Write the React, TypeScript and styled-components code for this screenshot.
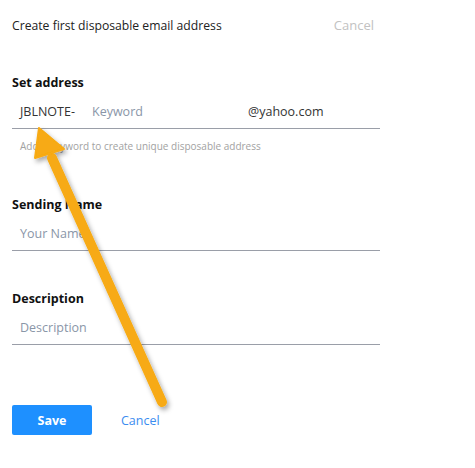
import React from "react";
import styled, { createGlobalStyle } from "styled-components";

const Global = createGlobalStyle`
  html, body { margin: 0; padding: 0; background: #fff; }
  body { font-family: "Open Sans", "Noto Sans", sans-serif; color: #1f1f1f; }
  * { box-sizing: border-box; }
`;

const Page = styled.div`
  position: relative;
  width: 475px;
  height: 468px;
  padding: 0 95px 0 12px;
  display: flex;
  flex-direction: column;
`;

const Header = styled.div`
  height: 50px;
  display: flex;
  align-items: center;
  justify-content: space-between;
  padding-right: 6px;
`;

const Title = styled.div`
  font-size: 12.2px;
  color: #222;
`;

const TopCancel = styled.span`
  font-size: 13px;
  color: #c2c2c2;
`;

const Section = styled.div<{ $top: number }>`
  margin-top: ${(p) => p.$top}px;
  display: flex;
  flex-direction: column;
`;

const Label = styled.div`
  font-size: 12.5px;
  font-weight: 700;
  color: #111;
  line-height: 18px;
`;

const Field = styled.div`
  height: 37px;
  display: flex;
  align-items: center;
  padding: 2px 0 0 8px;
  border-bottom: 1px solid #9a9ea8;
  font-size: 12.5px;
`;

const Prefix = styled.span`
  color: #333;
  width: 72px;
`;

const Placeholder = styled.span<{ $w?: number }>`
  color: #8a96a8;
  ${(p) => (p.$w ? `width: ${p.$w}px;` : "")}
`;

const Domain = styled.span`
  color: #333;
`;

const Help = styled.div`
  font-size: 10px;
  color: #a2a2a2;
  padding: 10px 0 0 8px;
`;

const Actions = styled.div`
  margin-top: 60px;
  display: flex;
  align-items: center;
  gap: 29px;
`;

const SaveButton = styled.button`
  width: 80px;
  height: 30px;
  border: none;
  border-radius: 2px;
  background: #1e90ff;
  color: #fff;
  font-family: inherit;
  font-size: 12.5px;
  font-weight: 700;
`;

const CancelLink = styled.span`
  font-size: 12.5px;
  color: #3b8cf0;
`;

const Arrow = styled.svg`
  position: absolute;
  left: 0;
  top: 0;
  pointer-events: none;
`;

export default function App() {
  return (
    <>
      <Global />
      <Page>
        <Header>
          <Title>Create first disposable email address</Title>
          <TopCancel>Cancel</TopCancel>
        </Header>
        <Section $top={24}>
          <Label>Set address</Label>
          <Field>
            <Prefix>JBLNOTE-</Prefix>
            <Placeholder $w={156}>Keyword</Placeholder>
            <Domain>@yahoo.com</Domain>
          </Field>
          <Help>Add a keyword to create unique disposable address</Help>
        </Section>
        <Section $top={43}>
          <Label>Sending Name</Label>
          <Field>
            <Placeholder>Your Name</Placeholder>
          </Field>
        </Section>
        <Section $top={39}>
          <Label>Description</Label>
          <Field>
            <Placeholder>Description</Placeholder>
          </Field>
        </Section>
        <Actions>
          <SaveButton>Save</SaveButton>
          <CancelLink>Cancel</CancelLink>
        </Actions>
        <Arrow width="475" height="468" viewBox="0 0 475 468">
          <defs>
            <filter id="sh" x="-20%" y="-20%" width="140%" height="140%">
              <feDropShadow dx="2" dy="3" stdDeviation="2.5" floodColor="#000" floodOpacity="0.35" />
            </filter>
          </defs>
          <g filter="url(#sh)">
            <line x1="52" y1="158" x2="162" y2="402" stroke="#f7aa12" strokeWidth="10" strokeLinecap="round" />
            <polygon points="39,128 35,158 64,149" fill="#f7aa12" stroke="#f7aa12" strokeWidth="2" strokeLinejoin="round" />
          </g>
        </Arrow>
      </Page>
    </>
  );
}
